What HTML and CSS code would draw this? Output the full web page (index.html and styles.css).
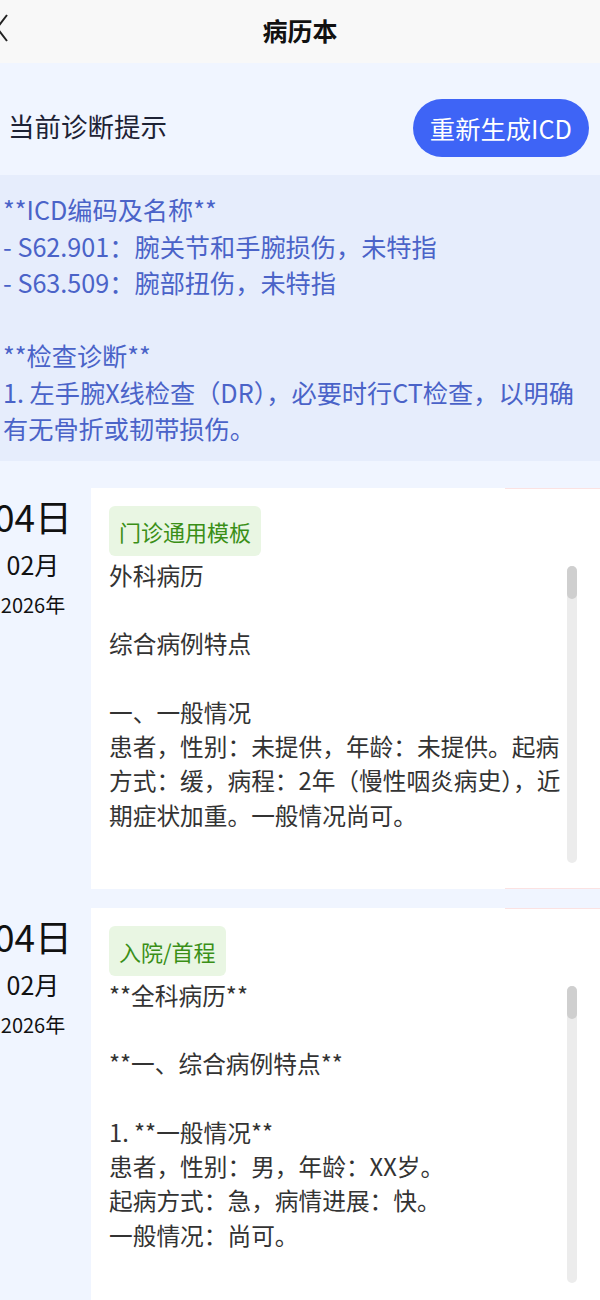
FILE: index.html
```html
<!DOCTYPE html>
<html lang="zh-CN">
<head>
    <meta charset="UTF-8">
    <meta name="viewport" content="width=device-width, initial-scale=1.0">
    <title>病历本</title>
    <link rel="stylesheet" href="styles.css">
</head>
<body>
    <header class="topbar">
        <svg class="back-icon" width="14" height="30" viewBox="0 0 14 30">
            <polyline points="11,2 1,15 11,28" fill="none" stroke="#222" stroke-width="2" />
        </svg>
        <h1 class="topbar-title">病历本</h1>
    </header>

    <section class="diag-head">
        <span class="diag-title">当前诊断提示</span>
        <button class="regen-button">重新生成ICD</button>
    </section>

    <div class="diag-box">**ICD编码及名称**
- S62.901：腕关节和手腕损伤，未特指
- S63.509：腕部扭伤，未特指

**检查诊断**
1. 左手腕X线检查（DR），必要时行CT检查，以明确有无骨折或韧带损伤。</div>

    <div class="records">
        <div class="record">
            <div class="record-date">
                <div class="date-day">04日</div>
                <div class="date-month">02月</div>
                <div class="date-year">2026年</div>
            </div>
            <div class="record-card">
                <span class="record-tag">门诊通用模板</span>
                <div class="record-content">外科病历

综合病例特点

一、一般情况
患者，性别：未提供，年龄：未提供。起病方式：缓，病程：2年（慢性咽炎病史），近期症状加重。一般情况尚可。

二、病史特点
1. 主诉：左手腕疼痛、活动受限3天。
2. 现病史：患者3天前运动时不慎摔倒，左手掌撑地，当即感左手腕疼痛，活动时加重，伴局部轻度肿胀，无麻木、无放射痛。
3. 既往史：慢性咽炎病史2年，否认高血压、糖尿病、心脏病史，否认药物及食物过敏史。

三、体格检查
左腕关节轻度肿胀，桡骨远端及鼻烟窝处压痛（+），腕关节屈伸活动受限，手指感觉、血运正常。

四、初步诊断
1. 腕关节和手腕损伤，未特指
2. 腕部扭伤，未特指</div>
                <div class="scroll-track"><div class="scroll-thumb"></div></div>
            </div>
        </div>

        <div class="record">
            <div class="record-date">
                <div class="date-day">04日</div>
                <div class="date-month">02月</div>
                <div class="date-year">2026年</div>
            </div>
            <div class="record-card">
                <span class="record-tag">入院/首程</span>
                <div class="record-content">**全科病历**

**一、综合病例特点**

1. **一般情况**
患者，性别：男，年龄：XX岁。
起病方式：急，病情进展：快。
一般情况：尚可。

2. **病史特点**
- 主诉：左手腕疼痛伴活动受限3天。
- 现病史：患者3天前摔倒时左手掌撑地，随即出现左腕部疼痛、肿胀，活动后加重。

**二、初步诊断**
1. 腕关节和手腕损伤，未特指
2. 腕部扭伤，未特指</div>
                <div class="scroll-track"><div class="scroll-thumb"></div></div>
            </div>
        </div>
    </div>
</body>
</html>
```

FILE: styles.css
```css
body {
    margin: 0;
    font-family: "Noto Sans CJK SC", "Noto Sans", sans-serif;
    background-color: #f0f5ff;
    color: #333;
}
.topbar {
    position: relative;
    height: 63px;
    display: flex;
    align-items: center;
    justify-content: center;
    background-color: #f8f8f8;
}
.back-icon {
    position: absolute;
    left: -4px;
    top: 13px;
}
.topbar-title {
    margin: 0 0 4px;
    font-size: 25px;
    font-weight: bold;
    color: #111;
}
.diag-head {
    display: flex;
    align-items: center;
    justify-content: space-between;
    padding: 36px 11px 18px 8px;
}
.diag-title {
    font-size: 26.5px;
    color: #1d2235;
    padding-bottom: 6px;
}
.regen-button {
    height: 58px;
    padding: 0 17px;
    border: none;
    border-radius: 29px;
    background-color: #3e64f6;
    color: #fff;
    font-family: inherit;
    font-size: 25.3px;
    cursor: pointer;
}
.diag-box {
    background-color: #e6edfc;
    color: #4a63c8;
    font-size: 25.2px;
    line-height: 36.5px;
    padding: 16px 18px 14px 3px;
    white-space: pre-line;
}
.records {
    padding-top: 27px;
    display: flex;
    flex-direction: column;
    gap: 19px;
}
.record {
    display: flex;
}
.record-date {
    width: 66px;
    flex-shrink: 0;
    margin-right: 25px;
    display: flex;
    flex-direction: column;
    align-items: center;
    color: #111;
    padding-top: 6px;
}
.date-day {
    font-size: 37px;
    line-height: 44px;
    white-space: nowrap;
}
.date-month {
    font-size: 25px;
    line-height: 34px;
    margin-top: 9px;
}
.date-year {
    font-size: 20px;
    line-height: 28px;
    margin-top: 10px;
    white-space: nowrap;
}
.record-card {
    position: relative;
    flex: 1;
    height: 401px;
    box-sizing: border-box;
    padding: 18px 23px 26px 18px;
    background-color: #fff;
}
.record-card::before,
.record-card::after {
    content: "";
    position: absolute;
    right: 0;
    width: 95px;
    height: 1px;
    background-color: #fbe2e2;
}
.record-card::before {
    top: 0;
}
.record-card::after {
    bottom: 0;
}
.record-tag {
    display: inline-block;
    height: 50px;
    line-height: 50px;
    padding: 0 10px;
    border-radius: 6px;
    background-color: #e9f6e3;
    color: #3a8f17;
    font-size: 22px;
}
.record-content {
    margin-top: 2px;
    height: 305px;
    padding-right: 10px;
    overflow: hidden;
    font-size: 23.7px;
    line-height: 34.3px;
    white-space: pre-line;
    color: #333;
}
.scroll-track {
    position: absolute;
    top: 78px;
    right: 23px;
    width: 10px;
    height: 297px;
    border-radius: 5px;
    background-color: #ececec;
}
.scroll-thumb {
    height: 33px;
    border-radius: 5px;
    background-color: #cfcfcf;
}
```
